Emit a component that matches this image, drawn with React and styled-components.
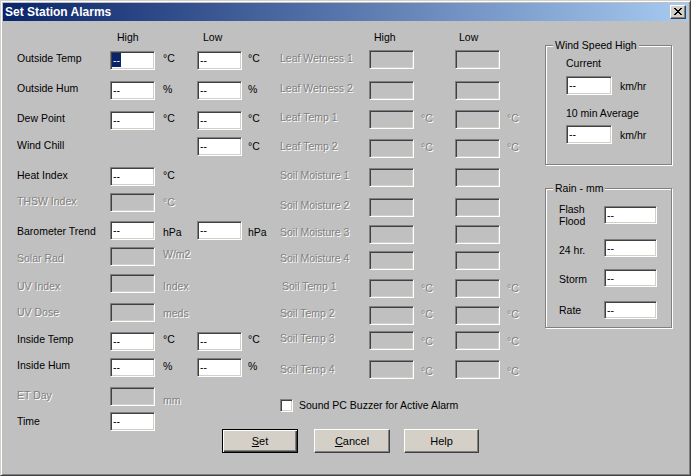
import React from 'react';
import styled, { createGlobalStyle, css } from 'styled-components';

const GlobalStyle = createGlobalStyle`
  html, body {
    margin: 0;
    padding: 0;
    background: #c0c0c0;
  }
  body {
    font-family: "Liberation Sans", Arial, sans-serif;
    font-size: 10.5px;
    color: #000;
  }
`;

const Window = styled.div`
  width: 691px;
  height: 476px;
  box-sizing: border-box;
  background: #c0c0c0;
  border: 1px solid;
  border-color: #d4d0c8 #404040 #404040 #d4d0c8;
  box-shadow: inset 1px 1px 0 #fff, inset -1px -1px 0 #808080;
  padding: 2px;
  overflow: hidden;
`;

const TitleBar = styled.div`
  height: 18px;
  display: flex;
  align-items: center;
  justify-content: space-between;
  padding: 0 2px 0 2px;
  background: linear-gradient(to right, #0a246a, #a6caf0);
`;

const Title = styled.span`
  color: #fff;
  font-weight: bold;
  font-size: 12px;
  line-height: 18px;
`;

const CloseButton = styled.div`
  box-sizing: border-box;
  width: 16px;
  height: 14px;
  background: #d4d0c8;
  border: 1px solid;
  border-color: #fff #404040 #404040 #fff;
  box-shadow: inset -1px -1px 0 #808080;
  display: flex;
  align-items: center;
  justify-content: center;
  padding: 0 1px 1px 0;
`;

const Body = styled.div`
  display: grid;
  grid-template-columns: 263px 265px 128px;
  grid-template-rows: auto auto;
  padding: 9px 0 0 14px;
`;

const LeftCol = styled.div`
  grid-column: 1;
  grid-row: 1 / 3;
  display: flex;
  flex-direction: column;
`;

const MidCol = styled.div`
  grid-column: 2;
  grid-row: 1;
  display: flex;
  flex-direction: column;
`;

const RightCol = styled.div`
  grid-column: 3;
  grid-row: 1;
  padding-top: 8px;
  display: flex;
  flex-direction: column;
`;

const Footer = styled.div`
  grid-column: 1 / 3;
  grid-row: 2;
  align-self: start;
  display: flex;
  padding-left: 205px;
  margin-top: 17px;
`;

const FormRow = styled.div`
  display: grid;
  grid-template-columns: ${p => p.$cols};
  align-items: start;
  height: ${p => p.$h}px;
`;

const HeadText = styled.div`
  line-height: 14px;
  padding-left: ${p => p.$pl}px;
`;

const disabledText = css`
  color: #808080;
  text-shadow: 1px 1px 0 #fff;
`;

const Label = styled.div`
  line-height: 14px;
  white-space: nowrap;
  padding-top: ${p => p.$dy || 0}px;
  padding-left: ${p => p.$indent || 0}px;
  ${p => p.$disabled && disabledText}
`;

const Unit = styled.div`
  line-height: 14px;
  white-space: nowrap;
  padding-left: ${p => p.$pl}px;
  padding-top: ${p => p.$dy || 0}px;
  ${p => p.$disabled && disabledText}
`;

const Field = styled.div`
  box-sizing: border-box;
  width: ${p => p.$w || 45}px;
  height: ${p => p.$h || 19}px;
  background: ${p => (p.$disabled ? '#c0c0c0' : '#fff')};
  border: 1px solid;
  border-color: #808080 #fff #fff #808080;
  box-shadow: inset 1px 1px 0 #404040, inset -1px -1px 0 #d4d0c8;
  padding: 1px 0 0 2px;
  line-height: 14px;
  white-space: nowrap;
  overflow: hidden;
`;

const Selected = styled.span`
  display: inline-block;
  background: #0a246a;
  color: #fff;
  margin-left: -1px;
  padding: 0 1px;
`;

const Group = styled.fieldset`
  margin: ${p => p.$mt || 0}px 0 0 0;
  padding: 0 0 0 7px;
  border: 1px solid #808080;
  box-shadow: inset 1px 1px 0 #fff, 1px 1px 0 #fff;
  min-width: 0;
  box-sizing: border-box;
  width: 127px;
`;

const Legend = styled.legend`
  padding: 0 2px;
  line-height: 14px;
  background: #c0c0c0;
`;

const WindBlock = styled.div`
  padding: 4px 0 20px 13px;
`;

const WindLabel = styled.div`
  line-height: 14px;
  margin-top: ${p => p.$mt || 0}px;
`;

const WindRow = styled.div`
  display: flex;
  align-items: center;
  margin-top: ${p => p.$mt}px;
`;

const RainBlock = styled.div`
  padding: 8px 0 8px 6px;
`;

const RainRow = styled.div`
  display: grid;
  grid-template-columns: 45px 53px;
  align-items: center;
  height: ${p => p.$h}px;
  margin-top: ${p => p.$mt || 0}px;
`;

const RainLabel = styled.div`
  line-height: 12px;
  padding-top: ${p => p.$dy || 0}px;
`;

const CheckRow = styled.label`
  display: flex;
  align-items: center;
  gap: 6px;
  line-height: 14px;
`;

const CheckBox = styled.span`
  box-sizing: border-box;
  width: 13px;
  height: 13px;
  background: #fff;
  border: 1px solid;
  border-color: #808080 #fff #fff #808080;
  box-shadow: inset 1px 1px 0 #404040, inset -1px -1px 0 #d4d0c8;
`;

const Button = styled.button`
  box-sizing: border-box;
  width: ${p => p.$w}px;
  height: 24px;
  margin: 0 0 0 ${p => p.$ml || 0}px;
  padding: 0;
  font-family: inherit;
  font-size: 11px;
  color: #000;
  background: #d4d0c8;
  border: 1px solid;
  border-color: #fff #404040 #404040 #fff;
  box-shadow: inset -1px -1px 0 #808080;
  ${p => p.$default && css`
    border-color: #000;
    box-shadow: inset 1px 1px 0 #fff, inset -1px -1px 0 #404040, inset -2px -2px 0 #808080;
  `}
  u {
    text-decoration: underline;
  }
`;

const LEFT_COLS = '93px 45px 42px 45px auto';
const MID_COLS = '89px 45px 41px 45px auto';

const leftRows = [
  { label: 'Outside Temp', h: 30, high: true, low: true, unit: '°C', uy: 0, selected: true },
  { label: 'Outside Hum', h: 30, high: true, low: true, unit: '%', uy: 1 },
  { label: 'Dew Point', h: 26, high: true, low: true, unit: '°C', uy: 0 },
  { label: 'Wind Chill', h: 30, ly: 1, low: true, unit: '°C', uy: 2 },
  { label: 'Heat Index', h: 26, ly: 1, high: true, unit: '°C', uy: 1 },
  { label: 'THSW Index', h: 28, ly: 1, high: true, unit: '°C', uy: 2, disabled: true },
  { label: 'Barometer Trend', h: 26, ly: 3, high: true, low: true, unit: 'hPa', uy: 4 },
  { label: 'Solar Rad', h: 27, ly: 4, high: true, unit: 'W/m2', uy: -1, disabled: true },
  { label: 'UV Index', h: 29, ly: 5, high: true, unit: 'Index', uy: 5, disabled: true },
  { label: 'UV Dose', h: 29, ly: 2, high: true, unit: 'meds', uy: 3, disabled: true },
  { label: 'Inside Temp', h: 26, high: true, low: true, unit: '°C', uy: 0 },
  { label: 'Inside Hum', h: 29, high: true, low: true, unit: '%', uy: 1 },
  { label: 'ET Day', h: 25, ly: 1, high: true, unit: 'mm', uy: 6, disabled: true },
  { label: 'Time', h: 19, ly: 2, high: true },
];

const midRows = [
  { label: 'Leaf Wetness 1', h: 31, ly: 1 },
  { label: 'Leaf Wetness 2', h: 29 },
  { label: 'Leaf Temp 1', h: 29, unit: '°C', uy: 1 },
  { label: 'Leaf Temp 2', h: 29, unit: '°C', uy: 1 },
  { label: 'Soil Moisture 1', h: 30 },
  { label: 'Soil Moisture 2', h: 27 },
  { label: 'Soil Moisture 3', h: 26 },
  { label: 'Soil Moisture 4', h: 28 },
  { label: 'Soil Temp 1', h: 27, unit: '°C', uy: 2, indent: 2 },
  { label: 'Soil Temp 2', h: 25, unit: '°C', uy: 1 },
  { label: 'Soil Temp 3', h: 29, unit: '°C', uy: 3 },
  { label: 'Soil Temp 4', h: 38, ly: 2, unit: '°C', uy: 4 },
];

function CloseGlyph() {
  const cells = [
    [0, 0, 2], [6, 0, 2], [1, 1, 2], [5, 1, 2], [2, 2, 4], [3, 3, 2],
    [2, 4, 4], [1, 5, 2], [5, 5, 2], [0, 6, 2], [6, 6, 2],
  ];
  return (
    <svg width="8" height="7" viewBox="0 0 8 7" shapeRendering="crispEdges">
      {cells.map(([x, y, w], i) => (
        <rect key={i} x={x} y={y} width={w} height={1} fill="#000" />
      ))}
    </svg>
  );
}

function Value({ row }) {
  if (row.disabled) return <Field $disabled />;
  return <Field>{row.selected ? <Selected>--</Selected> : '--'}</Field>;
}

function App() {
  return (
    <>
      <GlobalStyle />
      <Window>
        <TitleBar>
          <Title>Set Station Alarms</Title>
          <CloseButton>
            <CloseGlyph />
          </CloseButton>
        </TitleBar>

        <Body>
          <LeftCol>
            <FormRow $cols={LEFT_COLS} $h={21}>
              <span />
              <HeadText $pl={7}>High</HeadText>
              <span />
              <HeadText $pl={6}>Low</HeadText>
            </FormRow>
            {leftRows.map(row => (
              <FormRow key={row.label} $cols={LEFT_COLS} $h={row.h}>
                <Label $dy={row.ly} $disabled={row.disabled}>{row.label}</Label>
                {row.high ? <Value row={row} /> : <span />}
                {row.high && row.unit ? (
                  <Unit $pl={8} $dy={row.uy} $disabled={row.disabled}>{row.unit}</Unit>
                ) : <span />}
                {row.low ? <Field>--</Field> : <span />}
                {row.low && row.unit ? (
                  <Unit $pl={6} $dy={row.uy}>{row.unit}</Unit>
                ) : <span />}
              </FormRow>
            ))}
          </LeftCol>

          <MidCol>
            <FormRow $cols={MID_COLS} $h={20}>
              <span />
              <HeadText $pl={5}>High</HeadText>
              <span />
              <HeadText $pl={4}>Low</HeadText>
            </FormRow>
            {midRows.map(row => (
              <FormRow key={row.label} $cols={MID_COLS} $h={row.h}>
                <Label $dy={row.ly} $indent={row.indent} $disabled>{row.label}</Label>
                <Field $disabled />
                {row.unit ? <Unit $pl={7} $dy={row.uy} $disabled>{row.unit}</Unit> : <span />}
                <Field $disabled />
                {row.unit ? <Unit $pl={7} $dy={row.uy} $disabled>{row.unit}</Unit> : <span />}
              </FormRow>
            ))}
            <CheckRow>
              <CheckBox />
              Sound PC Buzzer for Active Alarm
            </CheckRow>
          </MidCol>

          <RightCol>
            <Group>
              <Legend>Wind Speed High</Legend>
              <WindBlock>
                <WindLabel>Current</WindLabel>
                <WindRow $mt={6}>
                  <Field $w={46}>--</Field>
                  <Unit $pl={8}>km/hr</Unit>
                </WindRow>
                <WindLabel $mt={11}>10 min Average</WindLabel>
                <WindRow $mt={5}>
                  <Field $w={46}>--</Field>
                  <Unit $pl={8}>km/hr</Unit>
                </WindRow>
              </WindBlock>
            </Group>

            <Group $mt={16}>
              <Legend>Rain - mm</Legend>
              <RainBlock>
                <RainRow $h={24}>
                  <RainLabel>Flash<br />Flood</RainLabel>
                  <Field $w={53} $h={18}>--</Field>
                </RainRow>
                <RainRow $h={18} $mt={12}>
                  <RainLabel $dy={3}>24 hr.</RainLabel>
                  <Field $w={53} $h={18}>--</Field>
                </RainRow>
                <RainRow $h={18} $mt={12}>
                  <RainLabel $dy={2}>Storm</RainLabel>
                  <Field $w={53} $h={18}>--</Field>
                </RainRow>
                <RainRow $h={18} $mt={14}>
                  <RainLabel $dy={-3}>Rate</RainLabel>
                  <Field $w={53} $h={18}>--</Field>
                </RainRow>
              </RainBlock>
            </Group>
          </RightCol>

          <Footer>
            <Button $w={76} $default><u>S</u>et</Button>
            <Button $w={76} $ml={16}><u>C</u>ancel</Button>
            <Button $w={75} $ml={14}>Help</Button>
          </Footer>
        </Body>
      </Window>
    </>
  );
}

export default App;
